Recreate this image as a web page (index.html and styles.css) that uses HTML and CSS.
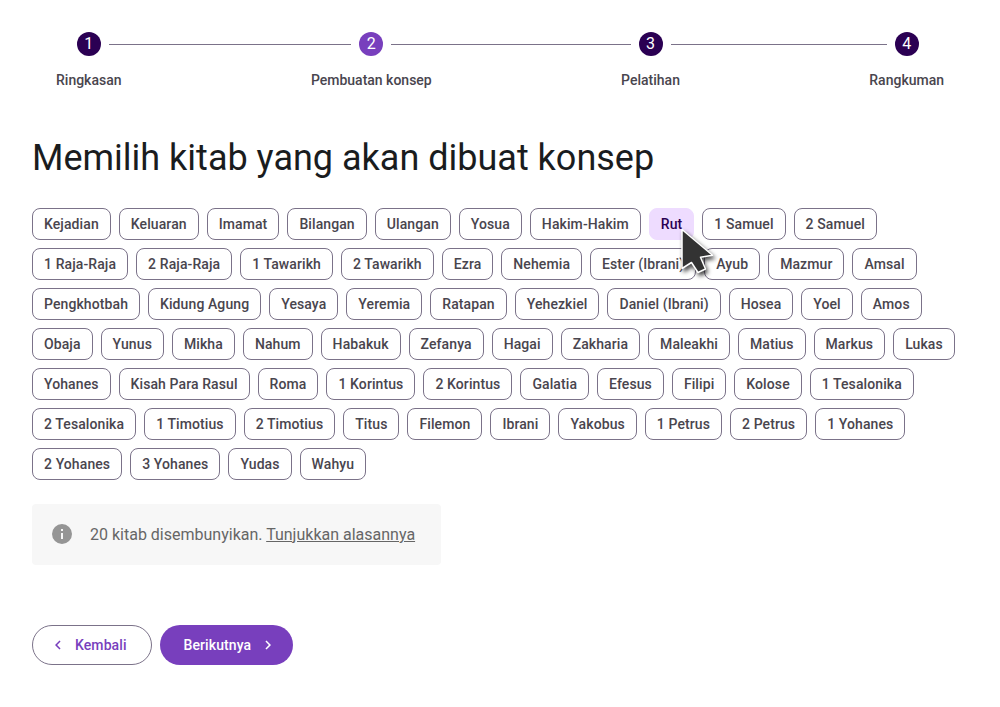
FILE: index.html
```html
<!DOCTYPE html>
<html lang="id">
<head>
<meta charset="utf-8">
<title>Memilih kitab</title>
<link rel="stylesheet" href="styles.css">
</head>
<body>
<header class="stepper">
<div class="step"><span class="num">1</span><span class="label">Ringkasan</span></div>
<i class="line first"></i>
<div class="step active"><span class="num">2</span><span class="label">Pembuatan konsep</span></div>
<i class="line second"></i>
<div class="step"><span class="num">3</span><span class="label">Pelatihan</span></div>
<i class="line third"></i>
<div class="step"><span class="num">4</span><span class="label">Rangkuman</span></div>
</header>
<main>
<h1>Memilih kitab yang akan dibuat konsep</h1>
<div class="chips">
<span class="chip">Kejadian</span><span class="chip">Keluaran</span><span class="chip">Imamat</span><span class="chip">Bilangan</span><span class="chip">Ulangan</span><span class="chip">Yosua</span><span class="chip">Hakim-Hakim</span><span class="chip selected">Rut<svg class="cursor" width="40" height="54" viewBox="0 0 40 54"><path d="M3 3.500V42.500L12.500 36.500L19 46.500L26.500 43L21.500 31.200L33.500 29.300Z" fill="#333" stroke="#fff" stroke-width="1.500" stroke-linejoin="round"/></svg></span><span class="chip">1 Samuel</span><span class="chip">2 Samuel</span>
<span class="chip">1 Raja-Raja</span><span class="chip">2 Raja-Raja</span><span class="chip">1 Tawarikh</span><span class="chip">2 Tawarikh</span><span class="chip">Ezra</span><span class="chip">Nehemia</span><span class="chip">Ester (Ibrani)</span><span class="chip">Ayub</span><span class="chip">Mazmur</span><span class="chip">Amsal</span>
<span class="chip">Pengkhotbah</span><span class="chip">Kidung Agung</span><span class="chip">Yesaya</span><span class="chip">Yeremia</span><span class="chip">Ratapan</span><span class="chip">Yehezkiel</span><span class="chip">Daniel (Ibrani)</span><span class="chip">Hosea</span><span class="chip">Yoel</span><span class="chip">Amos</span>
<span class="chip">Obaja</span><span class="chip">Yunus</span><span class="chip">Mikha</span><span class="chip">Nahum</span><span class="chip">Habakuk</span><span class="chip">Zefanya</span><span class="chip">Hagai</span><span class="chip">Zakharia</span><span class="chip">Maleakhi</span><span class="chip">Matius</span><span class="chip">Markus</span><span class="chip">Lukas</span>
<span class="chip">Yohanes</span><span class="chip">Kisah Para Rasul</span><span class="chip">Roma</span><span class="chip">1 Korintus</span><span class="chip">2 Korintus</span><span class="chip">Galatia</span><span class="chip">Efesus</span><span class="chip">Filipi</span><span class="chip">Kolose</span><span class="chip">1 Tesalonika</span>
<span class="chip">2 Tesalonika</span><span class="chip">1 Timotius</span><span class="chip">2 Timotius</span><span class="chip">Titus</span><span class="chip">Filemon</span><span class="chip">Ibrani</span><span class="chip">Yakobus</span><span class="chip">1 Petrus</span><span class="chip">2 Petrus</span><span class="chip">1 Yohanes</span>
<span class="chip">2 Yohanes</span><span class="chip">3 Yohanes</span><span class="chip">Yudas</span><span class="chip">Wahyu</span>
</div>
<div class="notice"><svg width="24" height="24" viewBox="0 0 24 24"><path fill="#959595" d="M12 2a10 10 0 1 0 0 20 10 10 0 0 0 0-20zm1 15h-2v-6h2zm0-8h-2V7h2z"/></svg><span>20 kitab disembunyikan. <u>Tunjukkan alasannya</u></span></div>
<div class="actions">
<button class="btn back"><svg width="18" height="18" viewBox="0 0 24 24"><path fill="currentColor" d="M15.410 7.410 14 6l-6 6 6 6 1.410-1.410L10.830 12z"/></svg>Kembali</button>
<button class="btn next">Berikutnya<svg width="18" height="18" viewBox="0 0 24 24"><path fill="currentColor" d="M10 6 8.590 7.410 13.170 12l-4.580 4.590L10 18l6-6z"/></svg></button>
</div>
</main>
</body>
</html>
```
FILE: styles.css
```css
* { box-sizing: border-box; }
body { margin: 0; background: #fff; color: #1a1c1e; font-family: Roboto, sans-serif; }
.stepper { display: flex; align-items: flex-start; padding: 32px 56px 0; height: 132px; }
.step { display: flex; flex-direction: column; align-items: center; gap: 14px; color: #49454e; }
.num { width: 24px; height: 24px; border-radius: 50%; background: #2b0053; color: #fff; font-size: 16px; line-height: 24px; text-align: center; }
.active .num { background: #783fbd; }
.label { font-size: 14px; line-height: 20px; font-weight: 500; white-space: nowrap; }
.line { flex: 1; padding-top: 12px; }
.line::before { content: ""; display: block; height: 1px; background: #7b7289; }
.first::before { margin: 0 -40px 0 -13px; }
.second::before { margin: 0 -10px 0 -41px; }
.third::before { margin: 0 -18px 0 -9px; }
main { padding: 0 32px; }
h1 { margin: 0; font-size: 36px; line-height: 52px; font-weight: 400; }
.chips { display: flex; flex-wrap: wrap; gap: 8px; margin-top: 24px; }
.chip { position: relative; height: 32px; padding: 0 11px; border: 1px solid #7b7289; border-radius: 8px; font-size: 14px; line-height: 30px; font-weight: 500; letter-spacing: 0.096px; color: #49454e; white-space: nowrap; }
.selected { background: #eedcff; border-color: #eedcff; color: #2b0053; }
.cursor { position: absolute; left: 29px; top: 17px; z-index: 2; overflow: visible; filter: drop-shadow(2px 3px 2px rgba(0, 0, 0, 0.7)); }
.notice { display: flex; align-items: center; gap: 16px; width: 409px; height: 61px; margin-top: 24px; padding: 0 18px; border-radius: 4px; background: #f7f7f7; color: #666; font-size: 16px; }
.notice svg { margin-bottom: 1px; }
.actions { display: flex; gap: 8px; margin-top: 60px; }
.btn { display: flex; align-items: center; height: 40px; border-radius: 20px; font: 500 14px Roboto, sans-serif; letter-spacing: 0.096px; }
.back { width: 120px; padding: 0 0 0 16px; gap: 8px; background: #fff; border: 1px solid #7b7289; color: #783fbd; }
.next { width: 133px; padding: 0 0 0 23.500px; gap: 8px; background: #783fbd; border: 0; color: #fff; }
```
